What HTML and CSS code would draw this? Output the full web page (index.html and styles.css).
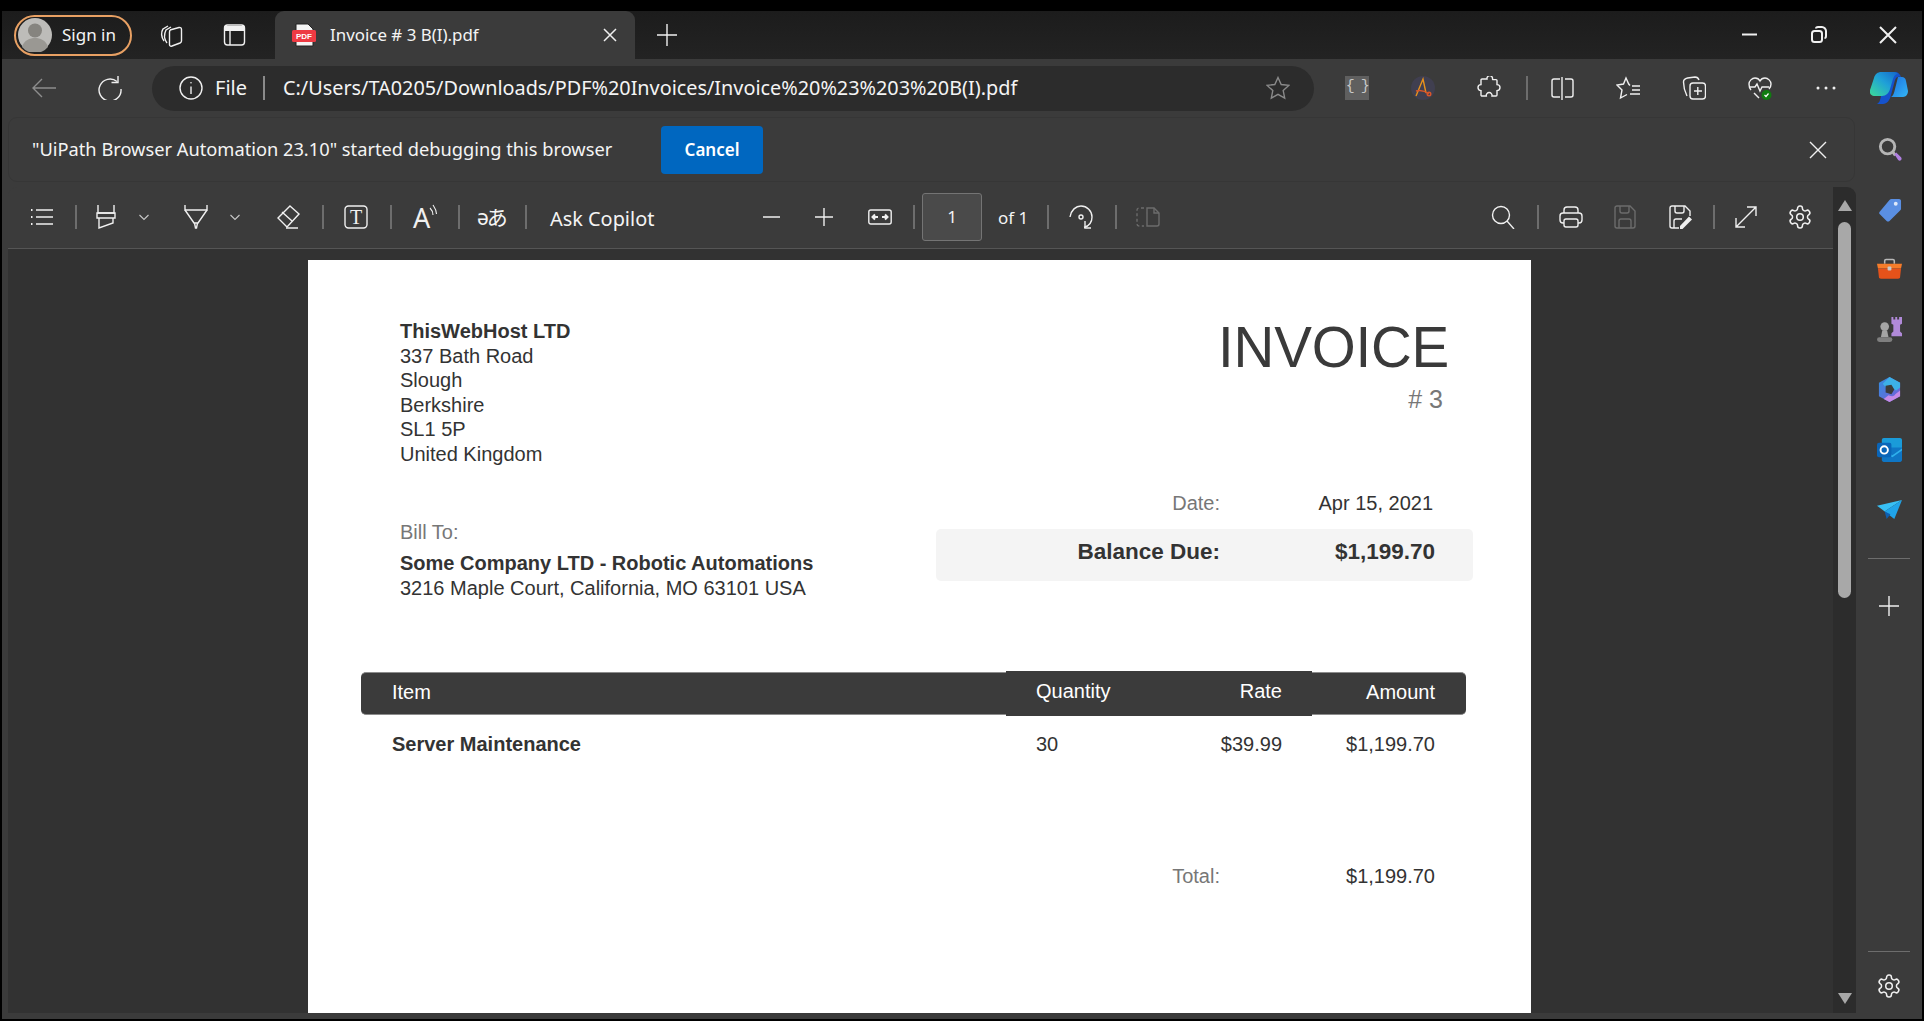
FILE: index.html
```html
<!DOCTYPE html>
<html lang="en">
<head>
<meta charset="UTF-8">
<title>Invoice # 3 B(I).pdf</title>
<link rel="stylesheet" href="styles.css">
</head>
<body>
<div class="app">

  <!-- tab strip -->
  <div class="tabbar">
    <div class="signin">
      <svg class="avatar" viewBox="0 0 34 34"><circle cx="17" cy="17" r="17" fill="#bdbcb9"/><circle cx="17" cy="12.5" r="7" fill="#86847f"/><path d="M4 29c2-7 8-9 13-9s11 2 13 9a17 17 0 0 1-26 0z" fill="#9a9893"/></svg>
      <span>Sign in</span>
    </div>
    <svg class="ic" viewBox="0 0 24 24"><path d="M5 18C2 14 2 9 4 6l5-3"/><path d="M8 20C5 16 5 11 7 7l5-3"/><path d="M11 7l9-2.500c1.500-.3 2.500.5 2.500 2V18c0 1-.5 1.500-1.500 2l-8 3c-1.500.5-2.500 0-2.500-1.500V9c0-1 .2-1.700 1-2z"/></svg>
    <svg class="ic" viewBox="0 0 24 24"><rect x="2.500" y="2" width="20" height="20" rx="3"/><path class="fill" d="M3 3h19v5H3z"/><path d="M8 7v15"/></svg>
    <div class="tab">
      <svg class="pdf-icon" viewBox="0 0 24 24"><path d="M4 1h12l5 5v17H4z" fill="#f4f4f4" stroke="#222" stroke-width="1"/><rect y="7" width="24" height="12" rx="1.500" fill="#ee3a43"/><text x="12" y="16.300" text-anchor="middle">PDF</text></svg>
      <span class="tab-title">Invoice # 3 B(I).pdf</span>
      <svg class="ic-small" viewBox="0 0 14 14"><path d="M1 1l12 12M13 1L1 13"/></svg>
    </div>
    <svg class="ic" viewBox="0 0 24 24"><path d="M12 1v22M2 12h20"/></svg>
    <svg class="ic" viewBox="0 0 24 24"><path class="thick" d="M4 11.500h15"/></svg>
    <svg class="ic" viewBox="0 0 24 24"><rect x="5" y="8" width="10" height="11" rx="2.500" class="thick"/><path class="thick" d="M9 5.500c0-1 1-1.500 2-1.500h4c2 0 4 2 4 4v5c0 1-.5 2-1.500 2"/></svg>
    <svg class="ic" viewBox="0 0 24 24"><path class="thick" d="M4 4l16 16M20 4L4 20"/></svg>
  </div>

  <!-- address bar row -->
  <div class="toolbar">
    <svg class="ic dim" viewBox="0 0 24 24"><path d="M24 12H1M10 3l-9 9 9 9"/></svg>
    <svg class="ic" viewBox="0 0 24 24"><path d="M19 5.500A11 11 0 1 0 23 13"/><path d="M20 0v6.500h-6.500"/></svg>
    <div class="urlbox">
      <svg class="ic" viewBox="0 0 24 24"><circle cx="12" cy="12" r="11"/><path d="M12 10.500V18"/><circle class="fill" cx="12" cy="6.800" r=".8"/></svg>
      <span class="url-file">File</span>
      <span class="url-sep"></span>
      <span class="url-text">C:/Users/TA0205/Downloads/PDF%20Invoices/Invoice%20%23%203%20B(I).pdf</span>
      <svg class="ic star" viewBox="0 0 24 24"><path d="M12 1.500l3.200 7 7.600.9-5.600 5.200 1.500 7.500L12 18.300l-6.700 3.800 1.500-7.500-5.600-5.200 7.600-.9z"/></svg>
    </div>
    <div class="ext-json">{ }</div>
    <svg class="ic" viewBox="0 0 24 24"><circle cx="12" cy="12" r="12" fill="#403f50" stroke="none"/><path d="M5 20L12 3l3 14" stroke="#e8921c"/><path d="M5 15c4-1 9 0 13 3" stroke="#d9562a"/><circle cx="18" cy="18" r="1.800" stroke="#d9562a"/></svg>
    <svg class="ic" viewBox="0 0 24 24"><path d="M6 3h4a2.800 2.800 0 1 1 5.500 0c0 .3 0 .4.200.6H19a1 1 0 0 1 1 1v4a3 3 0 1 1 0 6v4.400a1 1 0 0 1-1 1h-4a2.900 2.900 0 1 0-5.700 0H5a1 1 0 0 1-1-1v-4.400a3 3 0 1 1 0-6V4a1 1 0 0 1 1-1z"/></svg>
    <span class="sep"></span>
    <svg class="ic" viewBox="0 0 24 24"><path d="M10 3H4a2 2 0 0 0-2 2v14a2 2 0 0 0 2 2h6"/><path d="M15 3h6a2 2 0 0 1 2 2v14a2 2 0 0 1-2 2h-6"/><path d="M12 1v23"/></svg>
    <svg class="ic" viewBox="0 0 24 24"><path d="M14 9.500L12.700 8 10 2 7.500 8 1 9l5 5-1.500 8 6.500-3.500"/><path d="M16 10h8M16 14h8M14 18h10"/></svg>
    <svg class="ic" viewBox="0 0 24 24"><rect x="8" y="7" width="15.500" height="16" rx="3"/><path d="M5 20C3 16 1.500 10 1.500 6c0-2 1.500-3.500 4-4L13 1c2 0 3.500 1.500 4 3"/><path d="M15.800 11v8M12 15h8"/></svg>
    <svg class="ic" viewBox="0 0 24 24"><path d="M3 14C1 12 1 10 1 8c0-3 3-6 6-6 2 0 4 1 5 3 1-2 3-3 5-3 3 0 6 3 6 6 0 2-1 4-2 5"/><path d="M1 11h6l2-3 3 7 2-4h7"/><path d="M6 17l5 5"/><circle cx="18.500" cy="19" r="5" fill="#107c10" stroke="none"/><path class="tiny" d="M16.500 19l1.500 1.500 2.500-3"/></svg>
    <svg class="ic" viewBox="0 0 24 24"><circle class="fill" cx="4" cy="12" r="1.500"/><circle class="fill" cx="12" cy="12" r="1.500"/><circle class="fill" cx="20" cy="12" r="1.500"/></svg>
    <svg class="copilot" viewBox="0 0 38 34">
      <defs>
        <linearGradient id="cpA" x1="0" y1="1" x2="1" y2="0"><stop offset="0" stop-color="#3ddc97"/><stop offset=".55" stop-color="#1fa0d8"/><stop offset="1" stop-color="#1567c9"/></linearGradient>
        <linearGradient id="cpB" x1="0" y1="0" x2="1" y2="1"><stop offset="0" stop-color="#1b6fe0"/><stop offset="1" stop-color="#34b6f5"/></linearGradient>
      </defs>
      <path d="M21 26h12c3 0 5-3 5-6l-2-10c-.5-3-2-4-4-4h-4l-3 12c-.8 4-2 7-4 8z" fill="url(#cpB)"/>
      <path d="M13 1h12c3 0 5 2 6 5-3-1-5 0-6 3l-4 15c-1 5-4 9-8 9H7c3-2 3-4 4-8z" fill="#1552cc"/>
      <path d="M11 1h13c2 0 3 1 4 2-3 0-4 2-5 5l-3 10c-1 4-4 7-8 7H4c-3 0-5-3-4-6l4-12c1-4 4-6 7-6z" fill="url(#cpA)"/>
    </svg>
  </div>

  <div class="workarea">
    <div class="main">

      <div class="infobar">
        <span class="info-text">"UiPath Browser Automation 23.10" started debugging this browser</span>
        <button class="cancel-btn">Cancel</button>
        <svg class="ic info-close" viewBox="0 0 24 24"><path d="M4 4l16 16M20 4L4 20"/></svg>
      </div>

      <div class="frame">
        <div class="viewer-col">

          <div class="pdfbar">
            <svg class="ic" viewBox="0 0 24 24"><path d="M6 5h17M6 12h17M6 19h17"/><path d="M1 5h1.500M1 12h1.500M1 19h1.500" class="thick"/></svg>
            <span class="sep"></span>
            <svg class="ic" viewBox="0 0 24 24"><path d="M4 0v8h16V0"/><path d="M3 8h18v5H3z"/><path d="M5 13v10l14-5v-5"/></svg>
            <svg class="chev" viewBox="0 0 12 12"><path d="M1.500 4L6 8.500 10.500 4"/></svg>
            <svg class="ic" viewBox="0 0 24 24"><path d="M1 0v5h22V0"/><path d="M1 5l9 13h4l9-13"/><path d="M10.500 18l1 5h1l1-5"/></svg>
            <svg class="chev" viewBox="0 0 12 12"><path d="M1.500 4L6 8.500 10.500 4"/></svg>
            <svg class="ic" viewBox="0 0 24 24"><path d="M14 1l9 8-12 13-9-9z"/><path d="M6 7l10 9"/><path d="M10 23h12"/></svg>
            <span class="sep"></span>
            <svg class="ic" viewBox="0 0 24 24"><rect x="1" y="1" width="22" height="22" rx="3.500"/><text class="t-glyph" x="12" y="19" text-anchor="middle">T</text></svg>
            <span class="sep"></span>
            <svg class="ic read-aloud" viewBox="0 0 24 24"><text class="a-glyph" x="0" y="23">A</text><path d="M17 3c2 2 3 4 3 7M20 0c2 3 3.500 5 3.500 9"/></svg>
            <span class="sep"></span>
            <span class="translate">əあ</span>
            <span class="sep"></span>
            <span class="ask">Ask Copilot</span>
            <svg class="ic" viewBox="0 0 24 24"><path d="M4 12h17"/></svg>
            <svg class="ic" viewBox="0 0 24 24"><path d="M12 3v18M3 12h18"/></svg>
            <svg class="ic" viewBox="0 0 24 24"><rect x=".800" y="5" width="22.400" height="14" rx="2"/><path class="thick" d="M5 12h5M7 9.500L4.500 12 7 14.500M14 12h5M17 9.500l2.500 2.500-2.500 2.500"/></svg>
            <span class="sep"></span>
            <div class="pagebox">1</div>
            <span class="of-text">of 1</span>
            <span class="sep"></span>
            <svg class="ic" viewBox="0 0 24 24"><path d="M1 12C2 5 7 1 12 1c6 0 11 5 11 11 0 5-3 9-8 10.500"/><circle cx="12" cy="12" r="2"/><path d="M16 16v7h6"/></svg>
            <span class="sep"></span>
            <svg class="ic off" viewBox="0 0 24 24"><path stroke-dasharray="3 2.500" d="M8 3H3a2 2 0 0 0-2 2v14a2 2 0 0 0 2 2h5"/><path d="M11 3h7l5 5v11a2 2 0 0 1-2 2H11z"/><path d="M18 3v5h5"/></svg>
            <svg class="ic" viewBox="0 0 24 24"><circle cx="10" cy="10" r="8.500"/><path d="M16 16l7 8"/></svg>
            <span class="sep"></span>
            <svg class="ic" viewBox="0 0 24 24"><path d="M5 8V5a3 3 0 0 1 3-3h8a3 3 0 0 1 3 3v3"/><path d="M5 18H4a3 3 0 0 1-3-3v-4a3 3 0 0 1 3-3h16a3 3 0 0 1 3 3v4a3 3 0 0 1-3 3h-1"/><rect x="5" y="14" width="14" height="8" rx="2"/></svg>
            <svg class="ic off" viewBox="0 0 24 24"><path d="M4 1h13l5 5v15a2 2 0 0 1-2 2H4a2 2 0 0 1-2-2V3a2 2 0 0 1 2-2z"/><path d="M7 1v5a2 2 0 0 0 2 2h5a2 2 0 0 0 2-2V1"/><path d="M6 23v-7a2 2 0 0 1 2-2h8a2 2 0 0 1 2 2v7"/></svg>
            <svg class="ic" viewBox="0 0 24 24"><path d="M11 23H4a2 2 0 0 1-2-2V3a2 2 0 0 1 2-2h13l5 5v5"/><path d="M7 1v5a2 2 0 0 0 2 2h5a2 2 0 0 0 2-2V1"/><path d="M6 23v-7a2 2 0 0 1 2-2h6"/><path class="fill" d="M21 11.500l3 3L14.500 24H12v-3z"/></svg>
            <span class="sep"></span>
            <svg class="ic" viewBox="0 0 24 24"><path d="M2 22L22 2M13 2h9v9M2 13v9h9"/></svg>
            <svg class="ic" viewBox="1 1 22 22"><path d="M12.220 2h-.44a2 2 0 0 0-2 2v.18a2 2 0 0 1-1 1.730l-.43.250a2 2 0 0 1-2 0l-.15-.08a2 2 0 0 0-2.730.730l-.22.380a2 2 0 0 0 .730 2.730l.15.100a2 2 0 0 1 1 1.720v.510a2 2 0 0 1-1 1.740l-.15.090a2 2 0 0 0-.730 2.730l.22.380a2 2 0 0 0 2.730.730l.15-.08a2 2 0 0 1 2 0l.43.250a2 2 0 0 1 1 1.730V20a2 2 0 0 0 2 2h.44a2 2 0 0 0 2-2v-.18a2 2 0 0 1 1-1.730l.43-.25a2 2 0 0 1 2 0l.15.080a2 2 0 0 0 2.730-.730l.22-.390a2 2 0 0 0-.730-2.730l-.15-.08a2 2 0 0 1-1-1.740v-.5a2 2 0 0 1 1-1.740l.15-.090a2 2 0 0 0 .730-2.730l-.22-.38a2 2 0 0 0-2.730-.73l-.15.080a2 2 0 0 1-2 0l-.43-.25a2 2 0 0 1-1-1.730V4a2 2 0 0 0-2-2z"/><circle cx="12" cy="12" r="3"/></svg>
          </div>

          <div class="viewer">
            <div class="page">
              <div class="top-row">
                <div class="left-col">
                  <div class="from">
                    <div class="bold">ThisWebHost LTD</div>
                    <div>337 Bath Road</div>
                    <div>Slough</div>
                    <div>Berkshire</div>
                    <div>SL1 5P</div>
                    <div>United Kingdom</div>
                  </div>
                  <div class="bill">
                    <div class="muted">Bill To:</div>
                    <div class="bold bill-name">Some Company LTD - Robotic Automations</div>
                    <div class="bill-addr">3216 Maple Court, California, MO 63101 USA</div>
                  </div>
                </div>
                <div class="right-col">
                  <div class="inv-title">INVOICE</div>
                  <div class="inv-no">#&nbsp;3</div>
                  <div class="date-row">
                    <span class="muted">Date:</span>
                    <span>Apr 15, 2021</span>
                  </div>
                  <div class="balance-row">
                    <span>Balance Due:</span>
                    <span>$1,199.70</span>
                  </div>
                </div>
              </div>

              <div class="items">
                <div class="items-head">
                  <div class="th th-item">Item</div>
                  <div class="th th-qty">Quantity</div>
                  <div class="th th-rate">Rate</div>
                  <div class="th th-amt">Amount</div>
                </div>
                <div class="items-row">
                  <div class="td-item bold">Server Maintenance</div>
                  <div class="td-qty">30</div>
                  <div class="td-rate">$39.99</div>
                  <div class="td-amt">$1,199.70</div>
                </div>
                <div class="total-row">
                  <span class="muted">Total:</span>
                  <span>$1,199.70</span>
                </div>
              </div>
            </div>
          </div>
        </div>

        <div class="scrollbar">
          <span class="arrow-up"></span>
          <span class="thumb"></span>
          <span class="arrow-down"></span>
        </div>
      </div>
    </div>

    <!-- edge sidebar -->
    <div class="sidebar">
      <svg class="side-ic" viewBox="0 0 26 26"><circle cx="11" cy="10" r="7.500" fill="none" stroke="#b5b5b5" stroke-width="3"/><path d="M16 15l3 4" stroke="#b5b5b5" stroke-width="3"/><path d="M18 18l2-2 5 5c.8 1 .8 2 0 3s-2 .8-3 0z" fill="#b07fe0"/></svg>
      <svg class="side-ic" viewBox="0 0 26 26"><path d="M15 2h8c1 0 2 1 2 2v8c0 1-.3 1.500-1 2L13 25c-1 .8-2 .8-3 0l-7-7c-1-1-1-2 0-3L13 3c.6-.6 1.200-1 2-1z" fill="#5a8fe3"/><circle cx="19.500" cy="7" r="2" fill="#dfe9fa"/></svg>
      <svg class="side-ic" viewBox="0 0 26 26"><path d="M8 7V4c0-1 .6-1.500 1.500-1.500h7c1 0 1.500.5 1.500 1.500v3" fill="none" stroke="#b9b9b9" stroke-width="1.600"/><path d="M0 7h26l-1 5H1z" fill="#f57c2a"/><path d="M1 12h24l-1 9c0 1-1 1.500-2 1.500H4c-1 0-2-.5-2-1.500z" fill="#e5521a"/><rect x="11" y="10" width="4" height="4" rx="1" fill="#c9c9c9"/></svg>
      <svg class="side-ic" viewBox="0 0 26 26"><path d="M15 0h2v2.500h2V0h2v2.500h2V0h3v7l-2 1v7l2 2v3H15v-3l2-2V8l-2-1z" fill="#b18ad9"/><circle cx="8" cy="10" r="4.500" fill="#a5a5a5"/><path d="M5.500 14h5l1.500 7H4z" fill="#a5a5a5"/><rect y="21" width="16" height="5" rx="2.500" fill="#7f7f7f"/></svg>
      <svg class="side-ic" viewBox="0 0 26 26">
        <defs><linearGradient id="msA" x1="0" y1="0" x2="1" y2="1"><stop offset="0" stop-color="#2f8fe0"/><stop offset="1" stop-color="#7b5bd6"/></linearGradient></defs>
        <path d="M13 0l11 6v14l-11 6-11-6V6z" fill="url(#msA)"/><path d="M13 0l11 6v5l-4 3-5-3c-2-1-3 0-5 1L6 7z" fill="#3cb0e8"/><path d="M24 14v6l-11 6-6-3 5-4c3 1 5 2 7-1z" fill="#c58ae6"/><path d="M9 9l6-1 3 5-3 5-6-2z" fill="#3b3b3b"/></svg>
      <svg class="side-ic" viewBox="0 0 26 26"><path d="M7 1h17c1 0 2 1 2 2v9H5V3c0-1 1-2 2-2z" fill="#1a9bd9"/><path d="M5 11h21v13c0 1-1 2-2 2H7c-1 0-2-1-2-2z" fill="#0f76c5"/><path d="M26 12l-10 7-11-7v2l11 7 10-7z" fill="#2fb1ec"/><rect y="6" width="15" height="15" rx="2" fill="#0a65b8"/><circle cx="7.500" cy="13.500" r="3.800" fill="none" stroke="#fff" stroke-width="2"/></svg>
      <svg class="side-ic" viewBox="0 0 26 26"><path d="M0 9L26 3 8 15z" fill="#38c0f5"/><path d="M26 3L18 23l-10-8z" fill="#20a4ea"/><path d="M8 15l2 8 4-5z" fill="#0f5fb0"/></svg>
      <span class="side-rule"></span>
      <svg class="ic side-plus" viewBox="0 0 24 24"><path d="M12 2v20M2 12h20"/></svg>
      <span class="side-rule side-rule-low"></span>
      <svg class="ic side-gear" viewBox="1 1 22 22"><path d="M12.220 2h-.44a2 2 0 0 0-2 2v.18a2 2 0 0 1-1 1.730l-.43.250a2 2 0 0 1-2 0l-.15-.08a2 2 0 0 0-2.730.730l-.22.380a2 2 0 0 0 .730 2.730l.15.100a2 2 0 0 1 1 1.720v.510a2 2 0 0 1-1 1.740l-.15.090a2 2 0 0 0-.730 2.730l.22.380a2 2 0 0 0 2.730.730l.15-.08a2 2 0 0 1 2 0l.43.250a2 2 0 0 1 1 1.730V20a2 2 0 0 0 2 2h.44a2 2 0 0 0 2-2v-.18a2 2 0 0 1 1-1.730l.43-.25a2 2 0 0 1 2 0l.15.080a2 2 0 0 0 2.730-.730l.22-.390a2 2 0 0 0-.730-2.730l-.15-.08a2 2 0 0 1-1-1.740v-.5a2 2 0 0 1 1-1.740l.15-.090a2 2 0 0 0 .730-2.730l-.22-.38a2 2 0 0 0-2.730-.73l-.15.080a2 2 0 0 1-2 0l-.43-.25a2 2 0 0 1-1-1.730V4a2 2 0 0 0-2-2z"/><circle cx="12" cy="12" r="3"/></svg>
    </div>
  </div>
</div>
</body>
</html>
```

FILE: styles.css
```css
* {
  box-sizing: border-box;
}
html, body {
  margin: 0;
  height: 1021px;
  overflow: hidden;
}
body {
  background: #000;
  padding: 11px 2px 2px;
  font-family: "Noto Sans", "Open Sans", sans-serif;
  color: #f4f4f4;
}
.app {
  height: 1008px;
  background: #3b3b3b;
  display: flex;
  flex-direction: column;
}

/* shared icon look */
.ic {
  width: 24px;
  height: 24px;
  fill: none;
  stroke: #f0f0f0;
  stroke-width: 1.4;
  flex: none;
}
.ic .fill {
  fill: #f0f0f0;
  stroke: none;
}
.ic .thick {
  stroke-width: 2;
}
.ic .tiny {
  stroke: #fff;
  stroke-width: 1.2;
}
.ic.dim {
  stroke: #8d8d8d;
}
.ic.off {
  stroke: #6c6c6c;
}
.sep {
  width: 2px;
  height: 24px;
  background: #6d6d6d;
}

/* tabs */
.tabbar {
  height: 48px;
  background: linear-gradient(#1c1c1c, #232323);
  display: grid;
  grid-template-columns: 145px 63px 53px 380px 1083px 69px 69px auto;
  align-items: center;
  padding-left: 12px;
}
.signin {
  width: 118px;
  height: 41px;
  border: 2px solid #e8a063;
  border-radius: 21px;
  display: flex;
  align-items: center;
  padding-left: 2px;
  gap: 10px;
  font-size: 17px;
}
.signin span {
  margin-bottom: 2px;
}
.avatar {
  width: 34px;
  height: 34px;
}
.tab {
  width: 360px;
  height: 48px;
  background: #3b3b3b;
  border-radius: 9px 9px 0 0;
  display: flex;
  align-items: center;
  padding-left: 17px;
  padding-right: 18px;
}
.pdf-icon {
  width: 24px;
  height: 24px;
}
.pdf-icon text {
  font: bold 8px "Liberation Sans", sans-serif;
  fill: #fff;
}
.tab-title {
  margin-left: 14px;
  margin-bottom: 2px;
  font-size: 16.900px;
  flex: 1;
}
.ic-small {
  width: 14px;
  height: 14px;
  stroke: #f0f0f0;
  stroke-width: 1.5;
  fill: none;
}

/* address row */
.toolbar {
  height: 58px;
  display: grid;
  grid-template-columns: 66px 54px 1193px 66px 66px 49px 24px 66px 66px 66px 66px 56px auto;
  align-items: center;
  padding-left: 30px;
}
.urlbox {
  width: 1162px;
  height: 45px;
  background: #2c2c2c;
  border-radius: 23px;
  display: flex;
  align-items: center;
  padding-left: 27px;
  padding-right: 24px;
}
.url-file {
  margin-left: 12px;
  margin-bottom: 2px;
  font-size: 20px;
}
.url-sep {
  width: 2px;
  height: 24px;
  background: #8a8a8a;
  margin: 0 18px 0 16px;
}
.url-text {
  font-size: 19.830px;
  margin-bottom: 2px;
  flex: 1;
  white-space: nowrap;
}
.star {
  stroke: #8a8a8a;
}
.ext-json {
  width: 24px;
  height: 24px;
  background: #5f5f5f;
  color: #c9c9c9;
  font: 15px/22px "Liberation Mono", monospace;
  text-align: center;
  white-space: nowrap;
  letter-spacing: -1.500px;
}
.copilot {
  width: 38px;
  height: 34px;
}

/* main area */
.workarea {
  flex: 1;
  display: flex;
  min-height: 0;
}
.main {
  width: 1854px;
  padding-left: 6px;
  display: flex;
  flex-direction: column;
}
.infobar {
  width: 1847px;
  height: 65px;
  border: 1px solid #363636;
  border-radius: 9px;
  display: flex;
  align-items: center;
  padding-left: 23px;
  padding-right: 24px;
}
.info-text {
  font-size: 18.250px;
  margin-bottom: 2px;
  width: 629px;
  white-space: nowrap;
}
.cancel-btn {
  width: 102px;
  height: 48px;
  background: #0067c0;
  color: #fff;
  border: 0;
  border-radius: 4px;
  font: 600 17px "Noto Sans", sans-serif;
}
.info-close {
  margin-left: auto;
}

.frame {
  margin-top: 5px;
  height: 826px;
  display: flex;
  border-radius: 9px 9px 0 0;
  overflow: hidden;
}
.viewer-col {
  width: 1825px;
  display: flex;
  flex-direction: column;
}

/* pdf toolbar: tracks are the steps between item left edges */
.pdfbar {
  height: 62px;
  flex: none;
  background: #3b3b3b;
  border-bottom: 1px solid #555;
  display: grid;
  grid-template-columns: 45px 19px 44px 46px 45px 47px 46px 22px 46px 23px 45px 19px 48px 25px 209px 53px 56px 45px 9px 76px 49px 22px 46px 21px 355px 46px 22px 54px 55px 45px 21px 54px auto;
  align-items: center;
  padding-left: 22px;
  padding-bottom: 1px;
}
.chev {
  width: 12px;
  height: 12px;
  fill: none;
  stroke: #c8c8c8;
  stroke-width: 1.100;
}
.t-glyph {
  font: 20px "Liberation Serif", serif;
  fill: #f0f0f0;
  stroke: none;
}
.read-aloud {
  overflow: visible;
  stroke-width: 1.100;
}
.a-glyph {
  font: 27px "Noto Sans", sans-serif;
  fill: #f0f0f0;
  stroke: none;
}
.translate {
  font: 21px "Noto Sans", "Noto Sans CJK JP", sans-serif;
  line-height: 24px;
  letter-spacing: -2px;
  white-space: nowrap;
}
.ask {
  font-size: 19.900px;
  margin-top: 2px;
  white-space: nowrap;
}
.pagebox {
  width: 60px;
  height: 48px;
  background: #4a4a4a;
  border: 1px solid #747474;
  border-radius: 3px;
  text-align: center;
  font-size: 17px;
  line-height: 46px;
}
.of-text {
  font-size: 17px;
  white-space: nowrap;
}

.viewer {
  flex: 1;
  background: #323232;
  padding-top: 11px;
  overflow: hidden;
}

/* the invoice sheet */
.page {
  width: 1223px;
  height: 754px;
  margin-left: 300px;
  background: #fff;
  color: #333;
  font: 20px/24.500px "Liberation Sans", Arial, sans-serif;
  padding: 59px 58px 0 53px;
}
.bold {
  font-weight: bold;
}
.muted {
  color: #777;
}
.top-row {
  display: flex;
  justify-content: space-between;
}
.left-col {
  padding-left: 39px;
}
.bill {
  margin-top: 53.500px;
}
.bill-name {
  margin-top: 6.500px;
}
.bill-addr {
  margin-top: .500px;
}
.right-col {
  width: 537px;
}
.inv-title {
  margin-top: 3px;
  font-size: 56.500px;
  line-height: 52px;
  color: #3a3a3a;
  text-align: right;
  padding-right: 24px;
  letter-spacing: -.2px;
}
.inv-no {
  margin-top: 10px;
  font-size: 25px;
  line-height: 30px;
  color: #777;
  text-align: right;
  padding-right: 30px;
}
.date-row {
  margin-top: 77.250px;
  display: grid;
  grid-template-columns: 284px 1fr;
  padding-right: 40px;
  text-align: right;
}
.balance-row {
  margin-top: 13.250px;
  height: 52px;
  background: #f4f4f4;
  border-radius: 5px;
  display: grid;
  grid-template-columns: 284px 1fr;
  padding: 10.750px 38px 0 0;
  text-align: right;
  font-size: 22.500px;
  font-weight: bold;
}
.items {
  margin-top: 70.500px;
  margin-right: 7px;
}
.items-head,
.items-row {
  display: grid;
  grid-template-columns: 645px 150px 156px 154px;
}
.items-head {
  height: 45px;
  color: #fff;
  line-height: 41px;
}
.th {
  background: #3b3b3b;
}
.th-item,
.th-amt {
  margin: 1px 0;
  border-top: 1px solid #8c8c8c;
  border-bottom: 1px solid #8c8c8c;
  line-height: 38px;
}
.th-item {
  padding-left: 31px;
  border-radius: 5px 0 0 5px;
}
.th-qty,
.td-qty {
  padding-left: 30px;
}
.th-rate,
.td-rate {
  padding-right: 30px;
  text-align: right;
}
.th-amt,
.td-amt {
  padding-right: 31px;
  text-align: right;
}
.th-amt {
  border-radius: 0 5px 5px 0;
}
.items-row {
  margin-top: 16.500px;
}
.td-item {
  padding-left: 31px;
}
.total-row {
  margin-top: 107px;
  display: grid;
  grid-template-columns: 859px 215px;
  text-align: right;
}

/* scrollbar */
.scrollbar {
  width: 23px;
  background: #2c2c2c;
  display: flex;
  flex-direction: column;
  align-items: center;
  padding: 13px 0 9px;
}
.arrow-up,
.arrow-down {
  width: 0;
  height: 0;
  border-left: 7.500px solid transparent;
  border-right: 7.500px solid transparent;
}
.arrow-up {
  border-bottom: 11px solid #a8a8a8;
}
.arrow-down {
  border-top: 11px solid #a8a8a8;
  margin-top: auto;
}
.thumb {
  width: 13px;
  height: 376px;
  margin-top: 11px;
  background: #a8a8a8;
  border-radius: 7px;
}

/* sidebar */
.sidebar {
  width: 66px;
  display: flex;
  flex-direction: column;
  align-items: center;
  padding-top: 20px;
}
.side-ic {
  width: 25px;
  height: 25px;
  margin-bottom: 35px;
  flex: none;
}
.side-rule {
  width: 42px;
  height: 1px;
  background: #6d6d6d;
  margin-top: 1px;
  flex: none;
}
.side-plus {
  margin-top: 35px;
  margin-left: -1px;
}
.side-rule-low {
  margin-top: auto;
  margin-bottom: 22px;
}
.side-gear {
  margin-bottom: 21px;
}
```
